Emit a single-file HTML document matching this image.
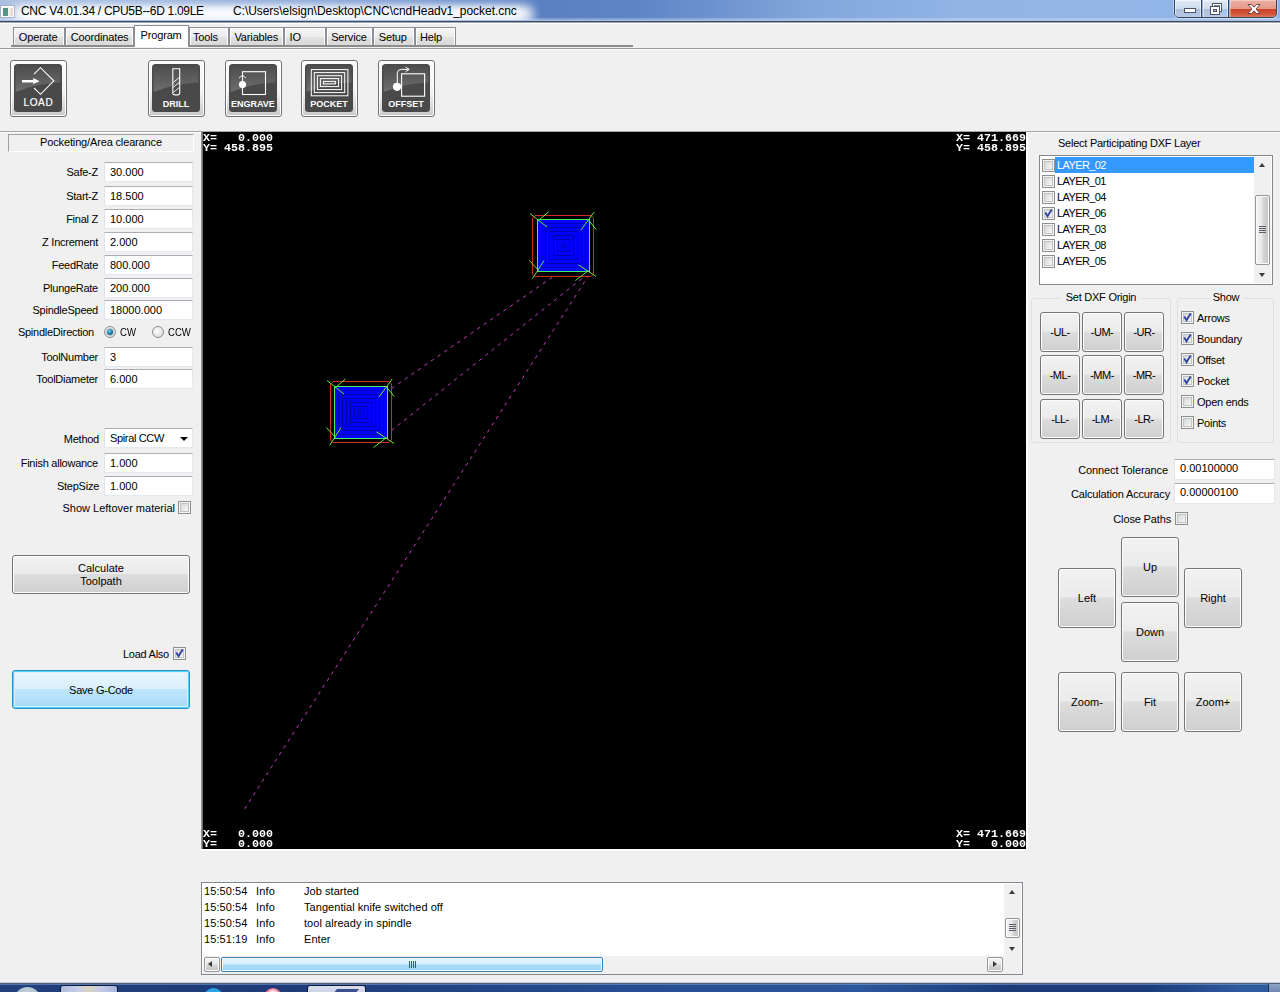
<!DOCTYPE html>
<html lang="en">
<head>
<meta charset="utf-8">
<title>CNC V4.01.34 / CPU5B--6D 1.09LE</title>
<style>
*{box-sizing:border-box;margin:0;padding:0}
html,body{width:1280px;height:992px;overflow:hidden;background:#f0f0f0}
body{position:relative;font-family:"Liberation Sans",sans-serif;font-size:11px;color:#000;line-height:13px}
.a{position:absolute}
.t{position:absolute;white-space:nowrap;height:13px;line-height:13px;letter-spacing:-0.25px}
.r{text-align:right}
.c{text-align:center}
/* title bar */
#title{left:0;top:0;width:1280px;height:22px;overflow:hidden;background:linear-gradient(90deg,#adc0e1 0px,#9fb7de 100px,#86a4d6 300px,#688ccb 480px,#5a80c0 540px,#5e85c5 640px,#84a8dd 820px,#91b4e5 960px,#93b6e7 1100px,#8fb3e6 1280px)}
#title:after{content:"";position:absolute;left:0;right:0;bottom:0;height:2px;background:linear-gradient(#a9c1e9 0,#a9c1e9 50%,#3b4a60 50%,#3b4a60 100%)}
#tsub{left:0;top:22px;width:1280px;height:2px;background:linear-gradient(#a4a9b0 0,#a4a9b0 50%,#fff 50%,#fff 100%)}
#ttext{left:21px;top:4px;font-size:12px;height:14px;line-height:14px}
/* inputs */
.in{position:absolute;background:#fff;border:1px solid #e3e9ef;border-top-color:#abadb3;border-left-color:#e2e3ea;height:20px;line-height:19px;padding-left:5px;white-space:nowrap}
/* buttons */
.b{position:absolute;border:1px solid #757575;border-radius:3px;background:linear-gradient(#f2f2f2 0%,#ebebeb 48%,#dddddd 50%,#cfcfcf 100%);box-shadow:inset 0 0 0 1px #fcfcfc;text-align:center;white-space:nowrap}
/* checkboxes */
.cb{position:absolute;width:13px;height:13px;border:1px solid #8e8f8f;background:#f4f4f4;box-shadow:inset 0 0 0 1px #f4f4f4,inset 0 0 0 2px #c0c3c6;}
.cb i{position:absolute;left:2px;top:2px;right:2px;bottom:2px;background:linear-gradient(135deg,#d6d8da,#f6f6f6)}
.cb svg{position:absolute;left:0;top:0}

/* tabs */
.tab{position:absolute;top:27px;height:18px;border:1px solid #8b8e94;border-bottom:none;background:linear-gradient(#f4f4f4 0%,#ededed 50%,#e2e2e2 52%,#d8d8d8 100%);box-shadow:inset 1px 1px 0 #fdfdfd,inset -1px 0 0 #fdfdfd;text-align:left;line-height:18px;padding-top:0;white-space:nowrap;letter-spacing:-0.15px}
.tab.sel{top:25px;height:22px;background:#fff;box-shadow:none;line-height:16px;padding-top:1px;z-index:3;border-color:#8b8e94}
#tabline{left:11px;top:45px;width:622px;height:2px;background:#8c8c8c;z-index:2}
#hline{left:0;top:48px;width:1280px;height:1px;background:#979797}
#hline2{left:0;top:49px;width:1280px;height:1px;background:#fafafa}

/* toolbar */
.tb{position:absolute;top:60px;width:57px;height:57px;border:1px solid #727272;border-radius:3px;background:linear-gradient(#fbfbfb 0%,#f4f4f4 55%,#d4d4d4 88%,#c9c9c9 100%);box-shadow:inset 0 0 0 1px #fdfdfd}
.tb svg{position:absolute;left:3px;top:3px;width:48px;height:48px}
.tb text{font-family:"Liberation Sans",sans-serif;font-weight:bold;font-size:9px;fill:#fff;text-anchor:middle}
#sepline{left:0;top:131px;width:1280px;height:1px;background:#a6a6a6}

/* left */
#pock{left:8px;top:134px;width:186px;height:18px;border:1px solid #fff;border-top-color:#a0a0a0;border-left-color:#a0a0a0;text-align:center;line-height:15px;letter-spacing:-0.15px}
.rad{position:absolute;width:12px;height:12px;border-radius:50%;border:1px solid #8e8f8f;background:radial-gradient(circle at 40% 40%,#fdfdfd 0%,#e6e6e6 60%,#c9cbcd 100%)}
.rad.on:after{content:"";position:absolute;left:2px;top:2px;width:6px;height:6px;border-radius:50%;background:radial-gradient(circle at 40% 35%,#7fd4f3 0%,#2080b4 45%,#0d3c5c 100%);box-shadow:0 0 0 1px #c3c8cc}
.combo{position:absolute;background:#fff;border:1px solid #e3e9ef;border-top-color:#abadb3;border-left-color:#e2e3ea;height:20px;line-height:19px;padding-left:5px;white-space:nowrap;letter-spacing:-0.35px}
.combo:after{content:"";position:absolute;right:4px;top:8px;border:4px solid transparent;border-top:4px solid #000;border-bottom:none}
.b2{line-height:13px;padding-top:6px}
#save{border-color:#2f8fcb;background:linear-gradient(#eaf6fd 0%,#d9f0fc 48%,#bee6fd 50%,#a7d9f5 100%);box-shadow:inset 0 0 0 1px #48d8fb,inset 0 0 0 2px #d7f1fc}

/* canvas */
#cv{left:203px;top:132px;width:823px;height:717px;background:#000}
#cvb{left:201px;top:132px;width:2px;height:717px;background:linear-gradient(90deg,#a8a8a8,#5a5a5a)}
#cvr{left:1026px;top:132px;width:2px;height:719px;background:#fff}
#cvbt{left:201px;top:849px;width:827px;height:2px;background:linear-gradient(#fff,#f8f8f8)}
#sepw{left:0;top:132px;width:1280px;height:1px;background:#fbfbfb}
.mono{position:absolute;font-family:"Liberation Mono",monospace;font-weight:bold;font-size:11.67px;letter-spacing:0;color:#fff;white-space:pre;line-height:11px;height:11px;transform:scaleY(0.9);transform-origin:0 0}

/* right */
.lb{position:absolute;background:#fff;border:1px solid #828790}
.grp{position:absolute;border:1px solid #dcdfe3;border-radius:3px}
.sbv{position:absolute;width:17px;background:#f0f0f0}
.thumbv{position:absolute;left:1px;width:15px;border:1px solid #979797;border-radius:2px;background:linear-gradient(90deg,#f3f3f3 0%,#e9e9e9 45%,#d6d6d6 55%,#c4c4c4 100%);box-shadow:inset 0 0 0 1px #fbfbfb}
.grip{position:absolute;left:3px;width:7px;height:7px;background:repeating-linear-gradient(#5a5f66 0,#5a5f66 1px,transparent 1px,transparent 2px)}
.arr{position:absolute;width:0;height:0;border:3.5px solid transparent}
.lr{position:absolute;left:15px;height:16px;line-height:17px;padding-left:2px;letter-spacing:-0.6px;white-space:nowrap}

/* log */
.lg{position:absolute;left:2px;height:16px;line-height:16px;white-space:nowrap;letter-spacing:0.05px}
.lg b{font-weight:normal;position:absolute;top:0}
.sbh{position:absolute;height:17px;background:#f0f0f0}
.thumbh{position:absolute;top:1px;height:15px;border:1px solid #3c7fb1;border-radius:2px;background:linear-gradient(#e3f4fc 0%,#d6effc 45%,#a9dbf6 55%,#9cd5f4 100%);box-shadow:inset 0 0 0 1px #effaff}
.sbtn{position:absolute;width:16px;height:15px;border:1px solid #979797;border-radius:2px;background:linear-gradient(#f3f3f3 0%,#e9e9e9 45%,#d6d6d6 55%,#c4c4c4 100%);box-shadow:inset 0 0 0 1px #fbfbfb}
/* taskbar */
#wb{left:0;top:981px;width:1280px;height:3px;background:linear-gradient(#f0f0f0 0,#fafafa 34%,#8d96a8 67%,#1b2c55 100%)}
#task{left:0;top:984px;width:1280px;height:8px;overflow:hidden;background:linear-gradient(90deg,#213f7d 0,#1d3b79 300px,#254c8f 600px,#2b579c 860px,#1b3b79 1010px,#1c3d7c 1150px,#2e5a9e 1240px,#2e5a9e 1280px)}
#task:before{content:"";position:absolute;left:0;top:0;width:1280px;height:1px;background:rgba(130,160,210,.55)}
#task div{position:absolute}

#glow{left:12px;top:5px;width:522px;height:18px;background:#fff;filter:blur(5px);opacity:.85;border-radius:9px}
#glow2{left:20px;top:8px;width:502px;height:12px;background:#fff;filter:blur(3px);opacity:.7;border-radius:6px}
#tsheen{left:0;top:18px;width:1280px;height:2px;background:rgba(255,255,255,.25)}
#wicon{left:1px;top:6px;width:13px;height:11px;background:#f4f4f0;border:1px solid #fafcfa;box-shadow:0 0 0 1px rgba(150,165,190,.6)}
#wicon:before{content:"";position:absolute;left:1px;top:1px;width:5px;height:8px;background:linear-gradient(#4e8f80,#5a9a86)}
#wicon:after{content:"";position:absolute;left:7px;top:1px;width:4px;height:8px;background:linear-gradient(90deg,#f6eee6,#e8d4cc)}
#capb{left:1174px;top:-1px;width:103px;height:19px;border:1px solid #37455d;border-radius:0 0 5px 5px;overflow:hidden;box-shadow:0 0 0 1px rgba(255,255,255,.35)}
#capb div{position:absolute;top:0;height:18px}
#bmin{left:0;width:27px;background:linear-gradient(#dfe8f5 0%,#cfdcee 48%,#aebfdb 52%,#b9cbe6 100%);border-right:1px solid #37455d;box-shadow:inset 0 0 0 1px rgba(255,255,255,.5)}
#bmax{left:28px;width:26px;background:linear-gradient(#dfe8f5 0%,#cfdcee 48%,#aebfdb 52%,#b9cbe6 100%);border-right:1px solid #37455d;box-shadow:inset 0 0 0 1px rgba(255,255,255,.5)}
#bcls{left:55px;width:47px;background:linear-gradient(#eeb0a2 0%,#e39a8a 48%,#c9432a 52%,#d4573a 80%,#e08a6a 100%);box-shadow:inset 0 0 0 1px rgba(255,255,255,.35)}
</style>
</head>
<body>
<div id="title" class="a"><div id="glow" class="a"></div><div id="glow2" class="a"></div><div id="tsheen" class="a"></div></div>
<div id="tsub" class="a"></div>
<div id="wicon" class="a"></div>
<div id="capb" class="a"><div id="bmin"><svg width="27" height="18" style="position:absolute;left:0;top:0"><rect x="9.5" y="8.5" width="11" height="4" fill="#fff" stroke="#4a5568" stroke-width="1"/></svg></div><div id="bmax"><svg width="26" height="18" style="position:absolute;left:0;top:0"><rect x="9.5" y="3.5" width="9" height="8" fill="#fff" stroke="#4a5568"/><rect x="11.5" y="5.5" width="5" height="4" fill="#b7c7e0" stroke="#4a5568" stroke-width="0.6"/><rect x="7.5" y="6.5" width="9" height="8" fill="#fff" stroke="#4a5568"/><rect x="10.5" y="9.5" width="3" height="2" fill="#b7c7e0" stroke="#4a5568"/></svg></div><div id="bcls"><svg width="47" height="18" style="position:absolute;left:0;top:0"><path d="M18,4.5H21.5L24,7.2L26.5,4.5H30L26,9L30,13.5H26.5L24,10.8L21.5,13.5H18L22,9Z" fill="#fff" stroke="#5a3a36" stroke-width="0.9"/></svg></div></div>
<div id="ttext" class="t" style="letter-spacing:-0.3px">CNC V4.01.34 / CPU5B--6D 1.09LE</div>
<div class="t" style="left:233px;top:4px;font-size:12px;height:14px;line-height:14px;letter-spacing:-0.05px">C:\Users\elsign\Desktop\CNC\cndHeadv1_pocket.cnc</div>
<div class="tab" style="left:13px;width:52px;padding-left:4.8px">Operate</div>
<div class="tab" style="left:65px;width:69px;padding-left:4.8px">Coordinates</div>
<div class="tab sel" style="left:134px;width:55px;padding-left:5.5px">Program</div>
<div class="tab" style="left:189px;width:40px;padding-left:3.0px">Tools</div>
<div class="tab" style="left:229px;width:55px;padding-left:4.5px">Variables</div>
<div class="tab" style="left:284px;width:42px;padding-left:4.5px">IO</div>
<div class="tab" style="left:326px;width:47px;padding-left:4.2px">Service</div>
<div class="tab" style="left:373px;width:42px;padding-left:4.8px">Setup</div>
<div class="tab" style="left:415px;width:41px;padding-left:4.0px">Help</div>
<div id="tabline" class="a"></div><div id="hline" class="a"></div><div id="hline2" class="a"></div>

<svg width="0" height="0" style="position:absolute"><defs><linearGradient id="gl" x1="0" y1="0" x2="0" y2="1"><stop offset="0" stop-color="#fff" stop-opacity="0.02"/><stop offset="1" stop-color="#fff" stop-opacity="0.2"/></linearGradient></defs></svg>
<div class="tb" style="left:10px"><svg viewBox="0 0 48 48"><rect x="0" y="0" width="48" height="48" rx="3.5" fill="#494949"/><path d="M1.5,3.5Q1.5,1.5 3.5,1.5H44.5Q46.5,1.5 46.5,3.5V18.5Q22,19.5 3.5,27.5L1.5,27.5Z" fill="url(#gl)"/><path d="M20,10.1L26.5,3.7L39.8,16.8L26.5,30.3L20,24" fill="none" stroke="#fff" stroke-width="1.1"/><path d="M8,15.9H19.2V14.1L25.6,17.2L19.2,20.3V18.5H8Z" fill="#fff"/><text x="24.4" y="42" style="font-weight:normal;font-size:10px;letter-spacing:0.6px;stroke:#fff;stroke-width:.2px">LOAD</text></svg></div>
<div class="tb" style="left:148px"><svg viewBox="0 0 48 48"><rect x="0" y="0" width="48" height="48" rx="3.5" fill="#494949"/><path d="M1.5,3.5Q1.5,1.5 3.5,1.5H44.5Q46.5,1.5 46.5,3.5V18.5Q22,19.5 3.5,27.5L1.5,27.5Z" fill="url(#gl)"/><path d="M20.8,4.8H27.7V29.3Q27.7,30.9 26,30.9H22.5Q20.8,30.9 20.8,29.3Z" fill="none" stroke="#fff" stroke-width="1.1"/><path d="M21.3,18.4L27.2,13.6M21.3,23.4L27.2,18.6M21.3,28.4L27.2,23.6" stroke="#fff" stroke-width="0.9" fill="none"/><text x="23.9" y="42.8">DRILL</text></svg></div>
<div class="tb" style="left:225px"><svg viewBox="0 0 48 48"><rect x="0" y="0" width="48" height="48" rx="3.5" fill="#494949"/><path d="M1.5,3.5Q1.5,1.5 3.5,1.5H44.5Q46.5,1.5 46.5,3.5V18.5Q22,19.5 3.5,27.5L1.5,27.5Z" fill="url(#gl)"/><rect x="13.5" y="7.7" width="23" height="22.8" fill="none" stroke="#fff" stroke-width="1.1"/><circle cx="13.5" cy="20.5" r="3.6" fill="#fff"/><path d="M10,14L13.5,11.2L17,14" fill="none" stroke="#fff" stroke-width="0.9"/><text x="23.9" y="42.8">ENGRAVE</text></svg></div>
<div class="tb" style="left:301px"><svg viewBox="0 0 48 48"><rect x="0" y="0" width="48" height="48" rx="3.5" fill="#494949"/><path d="M1.5,3.5Q1.5,1.5 3.5,1.5H44.5Q46.5,1.5 46.5,3.5V18.5Q22,19.5 3.5,27.5L1.5,27.5Z" fill="url(#gl)"/><g fill="none" stroke="#fff" stroke-width="1"><rect x="6.3" y="5.6" width="36.6" height="26.2"/><rect x="9.3" y="8.6" width="30.4" height="20"/><rect x="12.4" y="11.7" width="24.2" height="13.9"/><rect x="15.4" y="14.6" width="18.2" height="8"/><rect x="18.4" y="17.4" width="12" height="2.5"/></g><text x="24.1" y="42.8">POCKET</text></svg></div>
<div class="tb" style="left:378px"><svg viewBox="0 0 48 48"><rect x="0" y="0" width="48" height="48" rx="3.5" fill="#494949"/><path d="M1.5,3.5Q1.5,1.5 3.5,1.5H44.5Q46.5,1.5 46.5,3.5V18.5Q22,19.5 3.5,27.5L1.5,27.5Z" fill="url(#gl)"/><rect x="19.6" y="9.8" width="23" height="22.4" fill="none" stroke="#fff" stroke-width="1.1"/><circle cx="15" cy="22.8" r="4.1" fill="#fff"/><path d="M15.3,20V9.3Q15.3,5.4 19.2,5.4H27M23.6,3.2L27.2,5.4L23.6,7.7" fill="none" stroke="#fff" stroke-width="1"/><text x="24" y="42.8">OFFSET</text></svg></div>
<div id="sepline" class="a"></div>

<div id="pock" class="a">Pocketing/Area clearance</div>
<div class="t r" style="left:0;width:98px;top:166px">Safe-Z</div><div class="in" style="left:104px;top:162px;width:89px">30.000</div>
<div class="t r" style="left:0;width:98px;top:190px">Start-Z</div><div class="in" style="left:104px;top:186px;width:89px">18.500</div>
<div class="t r" style="left:0;width:98px;top:213px">Final Z</div><div class="in" style="left:104px;top:209px;width:89px">10.000</div>
<div class="t r" style="left:0;width:98px;top:236px">Z Increment</div><div class="in" style="left:104px;top:232px;width:89px">2.000</div>
<div class="t r" style="left:0;width:98px;top:259px">FeedRate</div><div class="in" style="left:104px;top:255px;width:89px">800.000</div>
<div class="t r" style="left:0;width:98px;top:282px">PlungeRate</div><div class="in" style="left:104px;top:278px;width:89px">200.000</div>
<div class="t r" style="left:0;width:98px;top:304px">SpindleSpeed</div><div class="in" style="left:104px;top:300px;width:89px">18000.000</div>
<div class="t r" style="left:0;width:98px;top:351px">ToolNumber</div><div class="in" style="left:104px;top:347px;width:89px">3</div>
<div class="t r" style="left:0;width:98px;top:373px">ToolDiameter</div><div class="in" style="left:104px;top:369px;width:89px">6.000</div>
<div class="t r" style="left:0;width:94px;top:326px">SpindleDirection</div>
<div class="rad on" style="left:104px;top:326px"></div><div class="t" style="left:120px;top:326px;letter-spacing:0;transform:scaleX(.87);transform-origin:0 0">CW</div>
<div class="rad" style="left:152px;top:326px"></div><div class="t" style="left:168px;top:326px;letter-spacing:0;transform:scaleX(.87);transform-origin:0 0">CCW</div>
<div class="t r" style="left:0;width:99px;top:433px">Method</div><div class="combo" style="left:104px;top:428px;width:89px">Spiral CCW</div>
<div class="t r" style="left:0;width:98px;top:457px">Finish allowance</div><div class="in" style="left:104px;top:453px;width:89px">1.000</div>
<div class="t r" style="left:0;width:99px;top:480px">StepSize</div><div class="in" style="left:104px;top:476px;width:89px">1.000</div>
<div class="t r" style="left:0;width:175px;top:502px;letter-spacing:0">Show Leftover material</div><div class="cb" style="left:178px;top:501px"><i></i></div>
<div class="b b2" style="left:12px;top:555px;width:178px;height:39px">Calculate<br>Toolpath</div>
<div class="t r" style="left:0;width:169px;top:648px">Load Also</div><div class="cb" style="left:173px;top:647px"><i></i><svg width="11" height="11" viewBox="0 0 11 11"><path d="M2.3,4.6L4.5,8.2L8.7,1.5" fill="none" stroke="#31449c" stroke-width="1.9"/></svg></div>
<div id="save" class="b" style="left:12px;top:670px;width:178px;height:39px;line-height:39px;letter-spacing:-0.25px">Save G-Code</div>

<div id="sepw" class="a"></div><div id="cvb" class="a"></div><div id="cvr" class="a"></div><div id="cvbt" class="a"></div><svg id="cv" class="a" viewBox="203 132 823 717" width="823" height="717"><g fill="none" stroke="#c838c0" stroke-width="1" stroke-dasharray="3.5 4.5"><path d="M391.5,388.4L552.4,277.2"/><path d="M391.5,430.5L586,275.3"/><path d="M244.6,808.8L588.8,275.3"/></g><rect x="537.5" y="219.5" width="52.0" height="52.0" fill="#0202f6"/><rect x="541.5" y="223.5" width="44.0" height="44.0" fill="none" stroke="#000050" stroke-opacity="0.35" stroke-width="1"/><rect x="545.5" y="227.5" width="36.0" height="36.0" fill="none" stroke="#000050" stroke-opacity="0.50" stroke-width="1"/><rect x="549.5" y="231.5" width="28.0" height="28.0" fill="none" stroke="#000050" stroke-opacity="0.40" stroke-width="1"/><rect x="553.5" y="235.5" width="20.0" height="20.0" fill="none" stroke="#000050" stroke-opacity="0.50" stroke-width="1"/><rect x="557.5" y="239.5" width="12.0" height="12.0" fill="none" stroke="#000050" stroke-opacity="0.40" stroke-width="1"/><rect x="561.5" y="243.5" width="4.0" height="4.0" fill="none" stroke="#000050" stroke-opacity="0.30" stroke-width="1"/><path d="M535.0,215.5H591.0L593.5,218.0V274.0L591.0,276.5H535.0L532.5,274.0V218.0Z" fill="none" stroke="#d42a1c" stroke-width="1"/><rect x="537.5" y="219.5" width="52.0" height="52.0" fill="none" stroke="#44ee66" stroke-width="1"/><path d="M530.0,213.5L547.0,227.0M538.5,220.5L548.5,212.0M581.0,230.0L594.2,212.0M588.5,220.0L596.1,229.5M532.5,278.5L544.0,260.5M529.5,260.5L538.5,270.5M578.5,264.9L596.1,276.5M575.5,280.5L588.5,270.5" fill="none" stroke="#5cf03a" stroke-width="1"/><rect x="334.5" y="386.5" width="53.0" height="52.0" fill="#0202f6"/><rect x="338.5" y="390.5" width="45.0" height="44.0" fill="none" stroke="#000050" stroke-opacity="0.35" stroke-width="1"/><rect x="342.5" y="394.5" width="37.0" height="36.0" fill="none" stroke="#000050" stroke-opacity="0.50" stroke-width="1"/><rect x="346.5" y="398.5" width="29.0" height="28.0" fill="none" stroke="#000050" stroke-opacity="0.40" stroke-width="1"/><rect x="350.5" y="402.5" width="21.0" height="20.0" fill="none" stroke="#000050" stroke-opacity="0.50" stroke-width="1"/><rect x="354.5" y="406.5" width="13.0" height="12.0" fill="none" stroke="#000050" stroke-opacity="0.40" stroke-width="1"/><rect x="358.5" y="410.5" width="5.0" height="4.0" fill="none" stroke="#000050" stroke-opacity="0.30" stroke-width="1"/><path d="M333.0,381.5H389.0L391.5,384.0V440.0L389.0,442.5H333.0L330.5,440.0V384.0Z" fill="none" stroke="#d42a1c" stroke-width="1"/><rect x="334.5" y="386.5" width="53.0" height="52.0" fill="none" stroke="#44ee66" stroke-width="1"/><path d="M327.0,380.5L344.0,394.0M335.5,387.5L345.5,379.0M379.0,397.0L392.2,379.0M386.5,387.0L394.1,396.5M329.5,445.5L341.0,427.5M326.5,427.5L335.5,437.5M376.5,431.9L394.1,443.5M373.5,447.5L386.5,437.5" fill="none" stroke="#5cf03a" stroke-width="1"/></svg>
<div class="mono" style="left:203px;top:134px">X=   0.000</div>
<div class="mono" style="left:203px;top:144px">Y= 458.895</div>
<div class="mono" style="left:956px;top:134px">X= 471.669</div>
<div class="mono" style="left:956px;top:144px">Y= 458.895</div>
<div class="mono" style="left:203px;top:830px">X=   0.000</div>
<div class="mono" style="left:203px;top:840px">Y=   0.000</div>
<div class="mono" style="left:956px;top:830px">X= 471.669</div>
<div class="mono" style="left:956px;top:840px">Y=   0.000</div>

<div class="t" style="left:1058px;top:137px">Select Participating DXF Layer</div>
<div class="lb" style="left:1039px;top:155px;width:234px;height:130px"><div class="lr" style="top:1px;width:199px;background:#3399ff;color:#fff">LAYER_02</div><div class="cb" style="left:2px;top:3px"><i></i></div><div class="lr" style="top:17px">LAYER_01</div><div class="cb" style="left:2px;top:19px"><i></i></div><div class="lr" style="top:33px">LAYER_04</div><div class="cb" style="left:2px;top:35px"><i></i></div><div class="lr" style="top:49px">LAYER_06</div><div class="cb" style="left:2px;top:51px"><i></i><svg width="11" height="11" viewBox="0 0 11 11"><path d="M2.3,4.6L4.5,8.2L8.7,1.5" fill="none" stroke="#31449c" stroke-width="1.9"/></svg></div><div class="lr" style="top:65px">LAYER_03</div><div class="cb" style="left:2px;top:67px"><i></i></div><div class="lr" style="top:81px">LAYER_08</div><div class="cb" style="left:2px;top:83px"><i></i></div><div class="lr" style="top:97px">LAYER_05</div><div class="cb" style="left:2px;top:99px"><i></i></div><div class="sbv" style="left:214px;top:1px;height:126px"><div class="arr" style="left:5px;top:6px;border-bottom:4px solid #3b3b3b;border-top:none"></div><div class="thumbv" style="top:38px;height:70px"><div class="grip" style="top:30px"></div></div><div class="arr" style="left:5px;top:116px;border-top:4px solid #3b3b3b;border-bottom:none"></div></div></div>
<div class="grp" style="left:1031px;top:298px;width:140px;height:145px"></div><div class="t c" style="left:1061px;top:291px;width:80px;background:#f0f0f0">Set DXF Origin</div>
<div class="grp" style="left:1177px;top:298px;width:97px;height:145px"></div><div class="t c" style="left:1209px;top:291px;width:34px;background:#f0f0f0">Show</div>
<div class="b" style="left:1040px;top:312px;width:40px;height:40px;line-height:39px;letter-spacing:-0.5px">-UL-</div><div class="b" style="left:1082px;top:312px;width:40px;height:40px;line-height:39px;letter-spacing:-0.5px">-UM-</div><div class="b" style="left:1124px;top:312px;width:40px;height:40px;line-height:39px;letter-spacing:-0.5px">-UR-</div>
<div class="b" style="left:1040px;top:355px;width:40px;height:40px;line-height:39px;letter-spacing:-0.5px">-ML-</div><div class="b" style="left:1082px;top:355px;width:40px;height:40px;line-height:39px;letter-spacing:-0.5px">-MM-</div><div class="b" style="left:1124px;top:355px;width:40px;height:40px;line-height:39px;letter-spacing:-0.5px">-MR-</div>
<div class="b" style="left:1040px;top:399px;width:40px;height:40px;line-height:39px;letter-spacing:-0.5px">-LL-</div><div class="b" style="left:1082px;top:399px;width:40px;height:40px;line-height:39px;letter-spacing:-0.5px">-LM-</div><div class="b" style="left:1124px;top:399px;width:40px;height:40px;line-height:39px;letter-spacing:-0.5px">-LR-</div>
<div class="cb" style="left:1181px;top:311px"><i></i><svg width="11" height="11" viewBox="0 0 11 11"><path d="M2.3,4.6L4.5,8.2L8.7,1.5" fill="none" stroke="#31449c" stroke-width="1.9"/></svg></div><div class="t" style="left:1197px;top:312px">Arrows</div>
<div class="cb" style="left:1181px;top:332px"><i></i><svg width="11" height="11" viewBox="0 0 11 11"><path d="M2.3,4.6L4.5,8.2L8.7,1.5" fill="none" stroke="#31449c" stroke-width="1.9"/></svg></div><div class="t" style="left:1197px;top:333px">Boundary</div>
<div class="cb" style="left:1181px;top:353px"><i></i><svg width="11" height="11" viewBox="0 0 11 11"><path d="M2.3,4.6L4.5,8.2L8.7,1.5" fill="none" stroke="#31449c" stroke-width="1.9"/></svg></div><div class="t" style="left:1197px;top:354px">Offset</div>
<div class="cb" style="left:1181px;top:374px"><i></i><svg width="11" height="11" viewBox="0 0 11 11"><path d="M2.3,4.6L4.5,8.2L8.7,1.5" fill="none" stroke="#31449c" stroke-width="1.9"/></svg></div><div class="t" style="left:1197px;top:375px">Pocket</div>
<div class="cb" style="left:1181px;top:395px"><i></i></div><div class="t" style="left:1197px;top:396px">Open ends</div>
<div class="cb" style="left:1181px;top:416px"><i></i></div><div class="t" style="left:1197px;top:417px">Points</div>
<div class="t r" style="left:1040px;width:128px;top:464px;letter-spacing:-0.1px">Connect Tolerance</div><div class="in" style="left:1174px;top:459px;width:101px;height:21px;line-height:17px">0.00100000</div>
<div class="t r" style="left:1040px;width:130px;top:488px;letter-spacing:-0.15px">Calculation Accuracy</div><div class="in" style="left:1174px;top:483px;width:101px;height:21px;line-height:17px">0.00000100</div>
<div class="t r" style="left:1040px;width:131px;top:513px;letter-spacing:-0.15px">Close Paths</div><div class="cb" style="left:1175px;top:512px"><i></i></div>
<div class="b" style="left:1121px;top:537px;width:58px;height:60px;line-height:59px">Up</div>
<div class="b" style="left:1121px;top:602px;width:58px;height:60px;line-height:59px">Down</div>
<div class="b" style="left:1058px;top:568px;width:58px;height:60px;line-height:59px">Left</div>
<div class="b" style="left:1184px;top:568px;width:58px;height:60px;line-height:59px">Right</div>
<div class="b" style="left:1058px;top:672px;width:58px;height:60px;line-height:59px">Zoom-</div>
<div class="b" style="left:1121px;top:672px;width:58px;height:60px;line-height:59px">Fit</div>
<div class="b" style="left:1184px;top:672px;width:58px;height:60px;line-height:59px">Zoom+</div>

<div class="lb" style="left:201px;top:882px;width:822px;height:93px"><div class="lg" style="top:0px"><b style="left:0;letter-spacing:.08px">15:50:54</b><b style="left:52px;letter-spacing:.2px">Info</b><b style="left:100px">Job started</b></div><div class="lg" style="top:16px"><b style="left:0;letter-spacing:.08px">15:50:54</b><b style="left:52px;letter-spacing:.2px">Info</b><b style="left:100px">Tangential knife switched off</b></div><div class="lg" style="top:32px"><b style="left:0;letter-spacing:.08px">15:50:54</b><b style="left:52px;letter-spacing:.2px">Info</b><b style="left:100px">tool already in spindle</b></div><div class="lg" style="top:48px"><b style="left:0;letter-spacing:.08px">15:51:19</b><b style="left:52px;letter-spacing:.2px">Info</b><b style="left:100px">Enter</b></div><div class="sbv" style="left:802px;top:1px;height:90px"><div class="arr" style="left:5px;top:6px;border-bottom:4px solid #3b3b3b;border-top:none"></div><div class="thumbv" style="top:34px;height:20px"><div class="grip" style="top:5px"></div></div><div class="arr" style="left:5px;top:63px;border-top:4px solid #3b3b3b;border-bottom:none"></div></div><div class="sbh" style="left:1px;top:73px;width:802px;height:18px"><div class="sbtn" style="left:1px;top:1px"><div class="arr" style="left:3px;top:3px;border-right:4px solid #3b3b3b;border-left:none"></div></div><div class="thumbh" style="left:18px;width:382px"><div style="position:absolute;left:187px;top:3px;width:7px;height:7px;background:repeating-linear-gradient(90deg,#2a5d8a 0,#2a5d8a 1px,transparent 1px,transparent 2px)"></div></div><div class="sbtn" style="left:784px;top:1px"><div class="arr" style="left:5px;top:3px;border-left:4px solid #3b3b3b;border-right:none"></div></div></div></div>

<div id="wb" class="a"></div><div id="task" class="a"><div style="left:14px;top:3px;width:27px;height:27px;border-radius:50%;background:radial-gradient(circle at 50% 30%,#c9d6dc,#8ea6b8)"></div><div style="left:60px;top:1px;width:58px;height:12px;border-radius:3px 3px 0 0;border:1px solid #0e1c3c;background:linear-gradient(90deg,#aeb9dc 0,#c6cde6 30%,#d9d4c0 50%,#c3cbe6 70%,#a5b2da 100%)"></div><div style="left:204px;top:4px;width:19px;height:19px;border-radius:50%;background:#2ba3e4"></div><div style="left:264px;top:4px;width:18px;height:18px;border-radius:50%;background:radial-gradient(circle at 50% 40%,#fff 0,#fbe0e6 30%,#e2365a 60%)"></div><div style="left:307px;top:1px;width:59px;height:12px;border-radius:3px 3px 0 0;border:1px solid #0e1c3c;background:linear-gradient(#d9dcec,#c9cee4)"><div style="left:24px;top:3px;width:22px;height:12px;background:#3a4f8c;transform:skewX(-40deg)"></div></div><div style="left:1268px;top:0;width:12px;height:8px;background:linear-gradient(#8fa3c4,#6f87b0);border-left:1px solid #17305f"></div></div>

</body>
</html>
